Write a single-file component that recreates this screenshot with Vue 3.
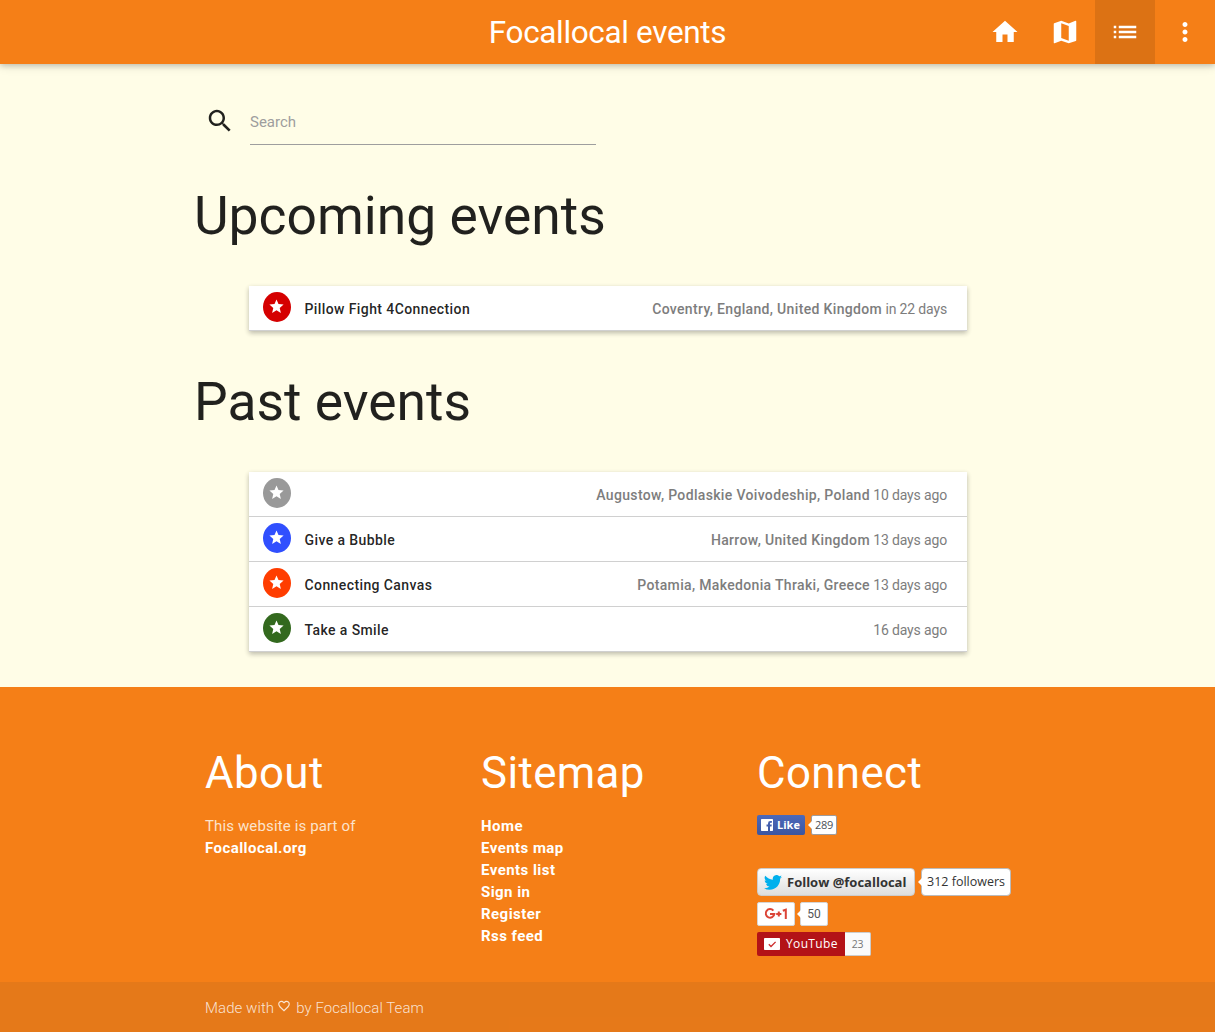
<script setup>
import { ref } from "vue"

const search = ref("")

const upcoming = [
  { title: "Pillow Fight 4Connection", place: "Coventry, England, United Kingdom", when: "in 22 days", color: "red" },
]

const past = [
  { title: "", place: "Augustow, Podlaskie Voivodeship, Poland", when: "10 days ago", color: "grey" },
  { title: "Give a Bubble", place: "Harrow, United Kingdom", when: "13 days ago", color: "blue" },
  { title: "Connecting Canvas", place: "Potamia, Makedonia Thraki, Greece", when: "13 days ago", color: "orange" },
  { title: "Take a Smile", place: "", when: "16 days ago", color: "green" },
]

const sections = [
  { name: "Upcoming events", events: upcoming },
  { name: "Past events", events: past },
]

const links = ["Home", "Events map", "Events list", "Sign in", "Register", "Rss feed"]
</script>

<template>
  <div class="page">
    <nav class="nav">
      <a class="brand">Focallocal events</a>
      <ul class="nav-icons">
        <li><svg viewBox="0 0 24 24"><path d="M10 20v-6h4v6h5v-8h3L12 3 2 12h3v8z" /></svg></li>
        <li><svg viewBox="0 0 24 24"><path d="M20.5 3l-.16.03L15 5.1 9 3 3.36 4.9c-.21.07-.36.25-.36.48V20.5c0 .28.22.5.5.5l.16-.03L9 18.9l6 2.1 5.64-1.9c.21-.07.36-.25.36-.48V3.5c0-.28-.22-.5-.5-.5zM15 19l-6-2.11V5l6 2.11V19z" /></svg></li>
        <li class="active"><svg viewBox="0 0 24 24"><path d="M3 13h2v-2H3v2zm0 4h2v-2H3v2zm0-8h2V7H3v2zm4 4h14v-2H7v2zm0 4h14v-2H7v2zM7 7v2h14V7H7z" /></svg></li>
        <li><svg viewBox="0 0 24 24"><path d="M12 8c1.1 0 2-.9 2-2s-.9-2-2-2-2 .9-2 2 .9 2 2 2zm0 2c-1.1 0-2 .9-2 2s.9 2 2 2 2-.9 2-2-.9-2-2-2zm0 6c-1.1 0-2 .9-2 2s.9 2 2 2 2-.9 2-2-.9-2-2-2z" /></svg></li>
      </ul>
    </nav>

    <main class="container">
      <div class="search">
        <svg viewBox="0 0 24 24"><path d="M15.5 14h-.79l-.28-.27C15.41 12.59 16 11.11 16 9.5 16 5.91 13.09 3 9.5 3S3 5.91 3 9.5 5.91 16 9.5 16c1.61 0 3.09-.59 4.23-1.57l.27.28v.79l5 4.99L20.49 19l-4.99-5zm-6 0C7.01 14 5 11.99 5 9.5S7.01 5 9.5 5 14 7.01 14 9.5 11.99 14 9.5 14z" /></svg>
        <input v-model="search" type="text" placeholder="Search" />
      </div>

      <section v-for="section in sections" :key="section.name">
        <h2>{{ section.name }}</h2>
        <ul class="events">
          <li v-for="event in section.events" :key="event.color" class="event">
            <span class="badge" :class="event.color">
              <svg viewBox="0 0 24 24"><path d="M12 17.27L18.18 21l-1.64-7.03L22 9.24l-7.19-.61L12 2 9.19 8.63 2 9.24l5.46 4.73L5.82 21z" /></svg>
            </span>
            <span class="title">{{ event.title }}</span>
            <span class="info"><b v-if="event.place">{{ event.place }}</b> {{ event.when }}</span>
          </li>
        </ul>
      </section>
    </main>

    <footer class="footer">
      <div class="container columns">
        <div class="col">
          <h3>About</h3>
          <p>This website is part of<br /><a>Focallocal.org</a></p>
        </div>
        <div class="col">
          <h3>Sitemap</h3>
          <ul class="links">
            <li v-for="link in links" :key="link"><a>{{ link }}</a></li>
          </ul>
        </div>
        <div class="col">
          <h3>Connect</h3>
          <div class="social facebook">
            <span class="fb-button">
              <svg viewBox="0 0 12 12"><path d="M.7 0h10.6q.7 0 .7.7v10.6q0 .7-.7.7H9V7.500h1.500l.3-1.900H9V4.600q0-.8.8-.8h1.100V2H9.300Q7 2 7 4.400v1.200H5.500v1.900H7V12H.7q-.7 0-.7-.7V.7Q0 0 .7 0z" /></svg>
              <b>Like</b>
            </span>
            <span class="bubble fb-count">289</span>
          </div>
          <div class="social twitter">
            <span class="tw-button">
              <svg viewBox="0 0 24 20"><path d="M24 2.400a10 10 0 0 1-2.800.8A5 5 0 0 0 23.300.5a10 10 0 0 1-3.100 1.200 4.920 4.920 0 0 0-8.400 4.500A14 14 0 0 1 1.700 1a4.920 4.920 0 0 0 1.500 6.600 5 5 0 0 1-2.200-.6 4.920 4.920 0 0 0 3.900 4.900 5 5 0 0 1-2.200.1 4.920 4.920 0 0 0 4.600 3.400A9.900 9.900 0 0 1 0 17.500a14 14 0 0 0 7.500 2.200c9.100 0 14.300-7.700 14-14.600A10 10 0 0 0 24 2.400z" /></svg>
              <b>Follow @focallocal</b>
            </span>
            <span class="bubble tw-count">312 followers</span>
          </div>
          <div class="social google">
            <span class="gp-button">
              <svg viewBox="0 0 24 12">
                <path d="M9.400 2.700A4.300 4.300 0 1 0 10.300 6H6" />
                <path d="M12.200 6h5.200M14.800 3.400v5.200" />
                <path d="M18.800 2.700L21.800 1.700V11" />
              </svg>
            </span>
            <span class="bubble gp-count">50</span>
          </div>
          <div class="social youtube">
            <span class="yt-button">
              <svg viewBox="0 0 16 12"><rect width="16" height="12" rx=".8" /><path d="M4.800 6.300l2.200 2.200 4.600-4.600" /></svg>
              <span class="yt-label">YouTube</span>
            </span>
            <span class="yt-count">23</span>
          </div>
        </div>
      </div>
      <div class="copyright">
        <div class="container made">
          <span>Made with</span>
          <svg viewBox="0 0 24 24"><path d="M16.500 3c-1.740 0-3.410.81-4.500 2.090C10.910 3.810 9.240 3 7.500 3 4.420 3 2 5.420 2 8.500c0 3.780 3.400 6.860 8.550 11.540L12 21.350l1.450-1.320C18.600 15.360 22 12.280 22 8.500 22 5.420 19.580 3 16.500 3zm-4.400 15.550l-.1.100-.1-.1C7.140 14.240 4 11.390 4 8.500 4 6.500 5.500 5 7.500 5c1.540 0 3.040.99 3.570 2.360h1.870C13.460 5.990 14.960 5 16.500 5c2 0 3.500 1.500 3.500 3.500 0 2.890-3.140 5.740-7.900 10.050z" /></svg>
          <span>by Focallocal Team</span>
        </div>
      </div>
    </footer>
  </div>
</template>

<style>
html,
body {
  margin: 0;
  background: #fffde7;
}
</style>

<style scoped>
.page {
  display: flex;
  flex-direction: column;
  height: 1032px;
  overflow: hidden;
  font: 15px/22px Roboto, sans-serif;
  color: rgba(0, 0, 0, 0.87);
}
ul {
  list-style: none;
  margin: 0;
  padding: 0;
}
svg {
  display: block;
  flex: none;
  fill: currentColor;
}
.container {
  width: 827px;
  margin: 0 auto;
}
.nav {
  display: grid;
  grid-template-columns: 1fr auto 1fr;
  flex: none;
  height: 64px;
  background: #f57f17;
  color: #fff;
  box-shadow: 0 2px 5px 0 rgba(0, 0, 0, 0.16), 0 2px 10px 0 rgba(0, 0, 0, 0.12);
  z-index: 1;
}
.brand {
  grid-column: 2;
  font-size: 31.5px;
  line-height: 65px;
  letter-spacing: -0.35px;
}
.nav-icons {
  display: flex;
  justify-content: flex-end;
}
.nav-icons li {
  display: flex;
  align-items: center;
  justify-content: center;
  box-sizing: border-box;
  width: 60px;
  height: 64px;
  padding: 0 1px 1px 0;
}
.nav-icons svg {
  width: 30px;
  height: 30px;
}
.nav-icons .active {
  background: rgba(0, 0, 0, 0.1);
}

main {
  flex: 1;
}
.search {
  display: flex;
  align-items: flex-start;
  padding: 42px 0 0 11px;
  height: 80px;
}
.search svg {
  width: 30px;
  height: 30px;
}
.search input {
  box-sizing: border-box;
  width: 346px;
  height: 39px;
  margin-left: 15px;
  padding: 0 0 6px;
  border: 0;
  border-bottom: 1px solid #9e9e9e;
  outline: none;
  background: transparent;
  font: 15px Roboto, sans-serif;
}
.search input::placeholder {
  color: #9e9e9e;
}
h2,
h3 {
  margin: 0;
  font-weight: 400;
}
h2 {
  padding-top: 1px;
  font-size: 53.4px;
  line-height: 58px;
}
section {
  margin-bottom: 41px;
}
section:last-child {
  margin-bottom: 35px;
}
.events {
  width: 718px;
  margin: 41px 0 0 55px;
  background: #fff;
  box-shadow: 0 2px 5px 0 rgba(0, 0, 0, 0.16), 0 2px 5px 0 rgba(0, 0, 0, 0.12);
}
.event {
  display: flex;
  box-sizing: border-box;
  height: 45px;
  padding: 6px 20px 0 14px;
  border-bottom: 1px solid #d0d0d0;
  font-size: 14px;
  line-height: 34px;
}
.badge {
  display: flex;
  align-items: center;
  justify-content: center;
  box-sizing: border-box;
  width: 28px;
  height: 30px;
  margin-right: 13.5px;
  padding: 0 1px 1px 0;
  border-radius: 50%;
  color: #fff;
}
.badge svg {
  width: 17px;
  height: 17px;
}
.red { background: #d50000; }
.grey { background: #999; }
.blue { background: #304ffe; }
.orange { background: #ff3d00; }
.green { background: #33691e; }
.title {
  font-weight: 500;
  letter-spacing: 0.4px;
}
.info {
  margin-left: auto;
  color: #7d7d7d;
  letter-spacing: -0.15px;
}
.info b {
  font-weight: 500;
  letter-spacing: 0.34px;
}

.footer {
  flex: none;
  height: 345px;
  background: #f57f17;
  color: #fff;
}
.columns {
  display: grid;
  grid-template-columns: repeat(3, 276px);
  height: 295px;
}
.col {
  padding: 62px 0 0 11px;
}
h3 {
  font-size: 43.8px;
  line-height: 48px;
  letter-spacing: 0.4px;
  margin-bottom: 18px;
}
.col p {
  margin: 0;
  color: #fce3cc;
  letter-spacing: 0.13px;
}
.col a {
  font-weight: 700;
  color: #fff;
  letter-spacing: 0.45px;
}
.social {
  display: flex;
  align-items: center;
  font-family: "Open Sans", sans-serif;
}
.social > span {
  display: flex;
  align-items: center;
  box-sizing: border-box;
}
.bubble {
  position: relative;
  justify-content: center;
  background: #fff;
  border: 1px solid #bbb;
  border-radius: 2px;
}
/* pointer on the left side of the counters */
.bubble::before {
  content: "";
  position: absolute;
  left: -4px;
  top: 50%;
  margin-top: -4px;
  border: 4px solid transparent;
  border-left: 0;
  border-right-color: #fff;
}
.facebook {
  height: 20px;
  margin-bottom: 33px;
}
.fb-button {
  width: 48px;
  height: 20px;
  padding-left: 4px;
  gap: 4px;
  border-radius: 2px;
  background: linear-gradient(#4c69ba, #3b55a0);
  font-size: 11px;
}
.fb-button svg {
  width: 12px;
  height: 12px;
}
.fb-count {
  width: 26px;
  height: 20px;
  margin-left: 6px;
  border-color: #9f9c9c;
  font-size: 11px;
  letter-spacing: -0.3px;
  color: #4b4f56;
}
.twitter {
  height: 28px;
  margin-bottom: 6px;
  color: #333;
}
.tw-button {
  width: 158px;
  height: 28px;
  padding-left: 6px;
  gap: 5px;
  border: 1px solid #ccc;
  border-radius: 4px;
  background: linear-gradient(#fff, #dedede);
  font-size: 13px;
}
.tw-button svg {
  width: 18px;
  height: 15px;
  fill: #00b0ed;
}
.tw-count {
  width: 90px;
  height: 28px;
  margin-left: 6px;
  border-radius: 4px;
  font-size: 12.5px;
}
.google {
  height: 24px;
  margin-bottom: 6px;
}
.gp-button {
  justify-content: center;
  width: 38px;
  height: 24px;
  border: 1px solid #d5d5d5;
  border-radius: 2px;
  background: #fff;
}
.gp-button svg {
  width: 24px;
  height: 12px;
  fill: none;
  stroke: #db4437;
  stroke-width: 2;
}
.gp-count {
  width: 28px;
  height: 24px;
  margin-left: 5px;
  border-color: #d5d5d5;
  font: 12px Roboto, sans-serif;
  color: #555;
}
.youtube {
  height: 24px;
}
.yt-button {
  width: 88px;
  height: 24px;
  padding-left: 7px;
  gap: 6px;
  border-radius: 2px 0 0 2px;
  background: #b31217;
  font-size: 12px;
  letter-spacing: 0.35px;
}
.yt-button svg {
  width: 16px;
  height: 12px;
}
.yt-button path {
  fill: none;
  stroke: #cc2b2b;
  stroke-width: 1.3;
}
.yt-count {
  justify-content: center;
  width: 26px;
  height: 24px;
  border: 1px solid #ccc;
  border-left: 0;
  border-radius: 0 2px 2px 0;
  background: #fafafa;
  font-size: 10.5px;
  letter-spacing: -0.3px;
  color: #777;
}
.copyright {
  height: 50px;
  background: rgba(51, 51, 51, 0.08);
  color: rgba(255, 255, 255, 0.8);
}
.made {
  display: flex;
  align-items: center;
  box-sizing: border-box;
  height: 50px;
  padding: 2px 0 0 11px;
  font-weight: 300;
  letter-spacing: 0.07px;
}
.made svg {
  width: 14px;
  height: 14px;
  margin: -4px 5px 0 3px;
}
</style>
